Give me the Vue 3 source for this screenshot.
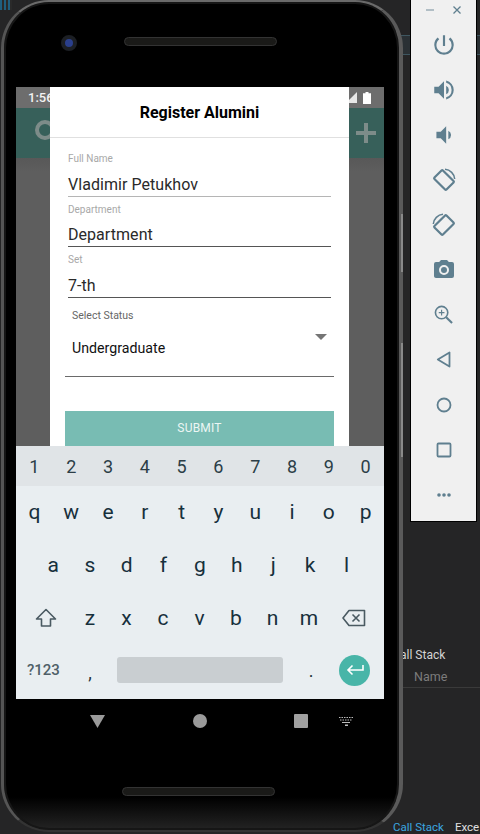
<script setup>
const fields = [
  { label: 'Full Name', value: 'Vladimir Petukhov', line: 'light' },
  { label: 'Department', value: 'Department', line: 'dark' },
  { label: 'Set', value: '7-th', line: 'dark' },
]

const digits = ['1', '2', '3', '4', '5', '6', '7', '8', '9', '0']
const row1 = ['q', 'w', 'e', 'r', 't', 'y', 'u', 'i', 'o', 'p']
const row2 = ['a', 's', 'd', 'f', 'g', 'h', 'j', 'k', 'l']
const row3 = ['z', 'x', 'c', 'v', 'b', 'n', 'm']
</script>

<template>
  <div class="desktop">
    <!-- IDE strip behind the emulator -->
    <div class="ide-lines"></div>
    <div class="ide-corner"></div>
    <div class="callstack-head">
      <span class="cs-title">all Stack</span>
      <span class="cs-name">Name</span>
    </div>
    <div class="ide-tabs">
      <span class="tab-blue">Call Stack</span>
      <span class="tab-white">Exce</span>
    </div>

    <!-- Phone -->
    <div class="phone">
      <div class="side-btn power"></div>
      <div class="side-btn volume"></div>
      <div class="top-bezel">
        <div class="camera"></div>
        <div class="speaker"></div>
      </div>

      <div class="screen">
        <div class="statusbar">
          <span class="time">1:56</span>
          <span class="status-icons">
            <svg width="12" height="11" viewBox="0 0 12 11"><path d="M12 0v11H1z" fill="#e8e8e8" /></svg>
            <svg width="8" height="12" viewBox="0 0 8 12"><path d="M2.500 0h3v1.200H8V12H0V1.200h2.500z" fill="#fff" /></svg>
          </span>
        </div>
        <div class="appbar">
          <span class="app-ring"></span>
          <svg width="20" height="20" viewBox="0 0 20 20"><path d="M8 0h4v8h8v4h-8v8H8v-8H0V8h8z" fill="#7d8c89" /></svg>
        </div>
        <div class="dimmed"></div>

        <!-- Modal form -->
        <div class="modal">
          <div class="modal-title">Register Alumini</div>
          <div class="form">
            <div v-for="f in fields" :key="f.label" class="field" :class="f.line">
              <div class="field-label">{{ f.label }}</div>
              <div class="field-value">{{ f.value }}</div>
            </div>
            <div class="select">
              <div class="select-label">Select Status</div>
              <div class="select-row">
                <span class="select-value">Undergraduate</span>
                <span class="select-arrow"></span>
              </div>
            </div>
            <button class="submit">SUBMIT</button>
          </div>
        </div>

        <!-- Keyboard -->
        <div class="keyboard">
          <div class="kb-digits">
            <span v-for="d in digits" :key="d">{{ d }}</span>
          </div>
          <div class="kb-row">
            <span v-for="k in row1" :key="k">{{ k }}</span>
          </div>
          <div class="kb-row inset">
            <span v-for="k in row2" :key="k">{{ k }}</span>
          </div>
          <div class="kb-row shift-row">
            <svg width="22" height="20" viewBox="0 0 22 20" fill="none" stroke="#4a5a62" stroke-width="1.600">
              <path d="M11 1.500 20.500 11H15.500v7H6.500v-7H1.500z" stroke-linejoin="round" />
            </svg>
            <div class="shift-letters">
              <span v-for="k in row3" :key="k">{{ k }}</span>
            </div>
            <svg width="24" height="18" viewBox="0 0 24 18" fill="none" stroke="#4a5a62" stroke-width="1.600">
              <path d="M7 1.500h15.500v15H7L1 9z" stroke-linejoin="round" />
              <path d="M10.500 5.500l7 7m0-7-7 7" />
            </svg>
          </div>
          <div class="kb-bottom">
            <span class="kb-sym">?123</span>
            <span class="kb-comma">,</span>
            <span class="kb-space"></span>
            <span class="kb-dot">.</span>
            <span class="kb-enter">
              <svg width="18" height="12" viewBox="0 0 18 12" fill="none" stroke="#fff" stroke-width="1.600">
                <path d="M17 1v5H2M6.500 1.500 2 6l4.500 4.500" />
              </svg>
            </span>
          </div>
        </div>
      </div>

      <div class="navbar">
        <svg width="15" height="13" viewBox="0 0 15 13"><path d="M0 0h15L7.500 13z" fill="#9a9a9a" /></svg>
        <span class="nav-circle"></span>
        <span class="nav-square"></span>
        <svg class="nav-kb" width="15" height="9" viewBox="0 0 15 9" fill="#bbb">
          <path d="M0 0h1.500v1H0zM2.500 0H4v1H2.500zM5 0h1.500v1H5zM7.500 0H9v1H7.500zM10 0h1.500v1H10zM12.500 0H14v1h-1.500zM1 2.500h1.500v1H1zM3.500 2.500H5v1H3.500zM6 2.500h1.500v1H6zM8.500 2.500H10v1H8.500zM11 2.500h1.500v1H11zM3 5h8v1H3zM6 7.500h3V9H6z" />
        </svg>
      </div>
      <div class="speaker bottom"></div>
    </div>

    <!-- Emulator side toolbar -->
    <div class="toolbar">
      <div class="win-btns">
        <svg width="10" height="10" viewBox="0 0 10 10"><path d="M1 5h8" stroke="#8fa3ad" stroke-width="1.300" /></svg>
        <svg width="10" height="10" viewBox="0 0 10 10"><path d="M1.500 1.500l7 7m0-7-7 7" stroke="#5f7f8f" stroke-width="1.300" /></svg>
      </div>
      <div class="tools">
        <!-- power -->
        <span class="tool"><svg class="solid" width="26" height="26" viewBox="0 0 24 24"><path d="M13 3h-2v10h2zm4.830 2.170-1.420 1.420A6.920 6.920 0 0 1 19 12c0 3.870-3.130 7-7 7s-7-3.130-7-7c0-2.190 1.010-4.140 2.580-5.420L6.170 5.170A8.930 8.930 0 0 0 3 12a9 9 0 0 0 18 0c0-2.740-1.220-5.190-3.170-6.830z" /></svg></span>
        <!-- volume up -->
        <span class="tool"><svg class="solid" width="26" height="26" viewBox="0 0 24 24"><path d="M3 9v6h4l5 5V4L7 9zm13.500 3A4.500 4.500 0 0 0 14 7.970v8.050A4.470 4.470 0 0 0 16.500 12zM14 3.230v2.060a7 7 0 0 1 0 13.420v2.060a9 9 0 0 0 0-17.540z" /></svg></span>
        <!-- volume down -->
        <span class="tool"><svg class="solid" width="26" height="26" viewBox="0 0 24 24"><path d="M5 9v6h4l5 5V4L9 9zm13.500 3A4.500 4.500 0 0 0 16 7.970v8.050A4.470 4.470 0 0 0 18.500 12z" /></svg></span>
        <!-- rotate left -->
        <span class="tool"><svg width="24" height="24" viewBox="0 0 24 24" fill="none" stroke="#5f7f8f" stroke-width="2.200">
          <rect x="6" y="3.500" width="12" height="17" rx="1" transform="rotate(-45 12 12)" />
          <path d="M13 1.300A10.500 10.500 0 0 1 22.700 11" stroke-width="1.500" />
        </svg></span>
        <!-- rotate right -->
        <span class="tool"><svg width="24" height="24" viewBox="0 0 24 24" fill="none" stroke="#5f7f8f" stroke-width="2.200">
          <rect x="6" y="3.500" width="12" height="17" rx="1" transform="rotate(45 12 12)" />
          <path d="M11 1.300A10.500 10.500 0 0 0 1.300 11" stroke-width="1.500" />
        </svg></span>
        <!-- camera -->
        <span class="tool"><svg class="solid" width="24" height="24" viewBox="0 0 24 24"><path d="M9 2 7.170 4H4a2 2 0 0 0-2 2v12c0 1.100.9 2 2 2h16a2 2 0 0 0 2-2V6a2 2 0 0 0-2-2h-3.170L15 2zm3 15a5 5 0 1 1 0-10 5 5 0 0 1 0 10zm0-2a3 3 0 1 0 0-6 3 3 0 0 0 0 6z" fill-rule="evenodd" /></svg></span>
        <!-- zoom -->
        <span class="tool"><svg width="19" height="19" viewBox="0 0 20 20" fill="none" stroke="#5f7f8f" stroke-width="1.700">
          <circle cx="8" cy="8" r="6.500" />
          <path d="M12.800 12.800 19 19" stroke-width="2.200" />
          <path d="M8 5v6M5 8h6" stroke-width="1.200" />
        </svg></span>
        <!-- back -->
        <span class="tool"><svg width="15" height="17" viewBox="0 0 15 17" fill="none" stroke="#5f7f8f" stroke-width="1.800"><path d="M13.500 1.500v14L1.800 8.500z" stroke-linejoin="round" /></svg></span>
        <!-- home -->
        <span class="tool"><svg width="16" height="16" viewBox="0 0 16 16" fill="none" stroke="#5f7f8f" stroke-width="1.800"><circle cx="8" cy="8" r="6.500" /></svg></span>
        <!-- overview -->
        <span class="tool"><svg width="16" height="16" viewBox="0 0 16 16" fill="none" stroke="#5f7f8f" stroke-width="1.800"><rect x="1.500" y="1.500" width="13" height="13" rx="1" /></svg></span>
        <!-- more -->
        <span class="tool"><svg class="solid" width="16" height="6" viewBox="0 0 16 6"><circle cx="3" cy="3" r="1.800" /><circle cx="8" cy="3" r="1.800" /><circle cx="13" cy="3" r="1.800" /></svg></span>
      </div>
    </div>
  </div>
</template>

<style>
html,
body {
  margin: 0;
  background: #252526;
}
</style>

<style scoped>
.desktop {
  position: relative;
  width: 480px;
  height: 834px;
  overflow: hidden;
  background: #252526;
  font-family: Roboto, 'Liberation Sans', sans-serif;
}

.ide-lines {
  position: absolute;
  left: 398px;
  top: 35px;
  width: 82px;
  height: 18px;
  background: #2a3034;
  border-top: 1px solid #3e5660;
  border-bottom: 1px solid #3e5660;
}

.ide-corner {
  position: absolute;
  left: 0;
  top: 0;
  width: 12px;
  height: 10px;
  background: repeating-linear-gradient(90deg, #1f5f7f 0, #1f5f7f 2px, #2a2a2a 2px, #2a2a2a 4px);
}

.callstack-head {
  position: absolute;
  left: 400px;
  top: 648px;
  width: 80px;
}

.cs-title {
  display: block;
  font-size: 12px;
  line-height: 15px;
  color: #d4d4d4;
}

.cs-name {
  display: block;
  margin-top: 6px;
  padding: 0 0 3px 14px;
  font-size: 12.500px;
  line-height: 15px;
  color: #7c7c7c;
  border-bottom: 1px solid #3a3a3a;
}

.ide-tabs {
  position: absolute;
  left: 393px;
  top: 821px;
  display: flex;
  gap: 11px;
  font-size: 11.500px;
  line-height: 13px;
  white-space: nowrap;
}

.tab-blue {
  color: #3ba7e0;
}

.tab-white {
  color: #e0e0e0;
}

.phone {
  position: absolute;
  left: 1px;
  top: 0;
  width: 402px;
  height: 832px;
  box-sizing: border-box;
  padding: 0 15px 0 12px;
  display: flex;
  flex-direction: column;
  border-radius: 48px;
  border-style: solid;
  border-width: 2px 4px 2px 3px;
  border-color: #6a6a6a #5a5a5a #333 #555;
  background: linear-gradient(#000 795px, #242424);
  box-shadow: inset 0 0 0 2px #161616;
}

.side-btn {
  position: absolute;
  right: -4px;
  width: 2px;
  background: #8a8a8a;
}

.side-btn.power {
  top: 212px;
  height: 58px;
}

.side-btn.volume {
  top: 341px;
  height: 114px;
}

.top-bezel {
  position: relative;
  height: 85px;
  flex-shrink: 0;
}

.camera {
  position: absolute;
  left: 45px;
  top: 33px;
  width: 8px;
  height: 8px;
  border-radius: 50%;
  background: #2a3f8c;
  border: 4px solid #1c1f24;
}

.speaker {
  position: absolute;
  left: 108px;
  top: 35px;
  width: 153px;
  height: 9px;
  box-sizing: border-box;
  border-radius: 5px;
  background: #1a1a18;
  border: 1px solid #333;
}

.speaker.bottom {
  top: auto;
  left: 118px;
  bottom: 34px;
}

.screen {
  position: relative;
  height: 612px;
  flex-shrink: 0;
  background: #5e5e5e;
  overflow: hidden;
}

.statusbar {
  height: 21px;
  padding: 0 13px 0 12px;
  display: flex;
  align-items: center;
  justify-content: space-between;
  background: #6d6d6d;
}

.time {
  font-size: 13px;
  font-weight: 500;
  color: #f2f2f2;
}

.status-icons {
  display: flex;
  align-items: center;
  gap: 6px;
}

.appbar {
  height: 50px;
  padding: 0 8px 0 19px;
  display: flex;
  align-items: center;
  justify-content: space-between;
  background: #37605a;
}

.app-ring {
  width: 20px;
  height: 20px;
  margin-bottom: 6px;
  box-sizing: border-box;
  border-radius: 50%;
  border: 4px solid #7d8c89;
}

.dimmed {
  height: 100%;
  background: linear-gradient(#585858, #5e5e5e 14px);
}

.modal {
  position: absolute;
  left: 34px;
  top: 0;
  width: 299px;
  height: 359px;
  background: #fff;
}

.modal-title {
  height: 51px;
  box-sizing: border-box;
  display: flex;
  align-items: center;
  justify-content: center;
  font-size: 16px;
  font-weight: 700;
  color: #000;
  border-bottom: 1px solid #e0e0e0;
}

.form {
  padding: 15px 15px 0;
}

.field {
  margin: 0 3px 7px;
  height: 43.500px;
  box-sizing: border-box;
  border-bottom: 1px solid #555;
}

.field.light {
  border-bottom-color: #b5b5b5;
}

.field-label {
  font-size: 10px;
  line-height: 12px;
  color: #a8a8a8;
}

.field-value {
  margin-top: 8.500px;
  font-size: 16px;
  line-height: 22px;
  letter-spacing: 0.05px;
  color: #2a2a2a;
}

.select {
  height: 67px;
  box-sizing: border-box;
  margin-top: 12px;
  padding: 0 7px;
  border-bottom: 1px solid #6a6a6a;
}

.select-label {
  font-size: 10.500px;
  line-height: 12px;
  color: #666;
}

.select-row {
  display: flex;
  justify-content: space-between;
}

.select-value {
  margin-top: 16px;
  font-size: 14.200px;
  line-height: 20px;
  color: #111;
}

.select-arrow {
  width: 0;
  height: 0;
  margin: 12px 0 0;
  border-left: 6px solid transparent;
  border-right: 6px solid transparent;
  border-top: 6px solid #757575;
}

.submit {
  display: block;
  width: 100%;
  height: 35px;
  margin-top: 34px;
  border: 0;
  padding: 0;
  background: #78bcb3;
  color: #ecf6f4;
  font-family: inherit;
  font-size: 12px;
  font-weight: 400;
  letter-spacing: 0.2px;
}

.keyboard {
  position: absolute;
  left: 0;
  right: 0;
  bottom: 0;
  height: 253px;
  background: #e9eef1;
  color: #17303c;
}

.kb-digits {
  height: 40px;
  display: grid;
  grid-template-columns: repeat(10, 1fr);
  align-items: center;
  justify-items: center;
  background: #e0e4e7;
  font-size: 18px;
  color: #2c3e47;
}

.kb-row {
  height: 53px;
  box-sizing: border-box;
  padding-bottom: 2px;
  display: grid;
  grid-template-columns: repeat(10, 1fr);
  align-items: center;
  justify-items: center;
  font-size: 21px;
}

.kb-row.inset {
  grid-template-columns: repeat(9, 1fr);
  padding: 0 19px 2px;
}

.shift-row {
  display: flex;
  justify-content: space-between;
  padding: 0 18px 2px 19px;
}

.shift-letters {
  width: 255.500px;
  display: grid;
  grid-template-columns: repeat(7, 1fr);
  justify-items: center;
}

.kb-bottom {
  height: 50px;
  padding: 0 14px 0 11px;
  display: flex;
  align-items: center;
  color: #4f5f68;
}

.kb-sym {
  width: 38px;
  font-size: 15px;
  font-weight: 500;
}

.kb-comma {
  width: 50px;
  margin-top: 4px;
  text-align: center;
  font-size: 18px;
  color: #263238;
}

.kb-space {
  width: 166px;
  height: 26px;
  margin-left: 2px;
  border-radius: 3px;
  background: #c9ced1;
}

.kb-dot {
  flex: 1;
  text-align: center;
  font-size: 18px;
  color: #263238;
}

.kb-enter {
  width: 31px;
  height: 31px;
  display: flex;
  align-items: center;
  justify-content: center;
  border-radius: 50%;
  background: #48b5a8;
}

.navbar {
  position: relative;
  height: 44px;
  padding: 0 76px 0 74px;
  display: flex;
  align-items: center;
  justify-content: space-between;
}

.nav-circle {
  width: 14px;
  height: 14px;
  border-radius: 50%;
  background: #9a9a9a;
}

.nav-square {
  width: 14px;
  height: 14px;
  border-radius: 1px;
  background: #a0a0a0;
}

.nav-kb {
  position: absolute;
  left: 323px;
  top: 18px;
}

.toolbar {
  position: absolute;
  left: 410px;
  top: 0;
  width: 67px;
  height: 522px;
  box-sizing: border-box;
  background: #f0f0f0;
  border: 1px solid #000;
  border-top: 0;
}

.win-btns {
  height: 22px;
  box-sizing: border-box;
  padding: 5px 14px 0;
  display: flex;
  justify-content: space-between;
}

.tools {
  display: flex;
  flex-direction: column;
}

.tool {
  height: 45px;
  display: flex;
  align-items: center;
  justify-content: center;
}

.solid {
  fill: #5f7f8f;
}
</style>
